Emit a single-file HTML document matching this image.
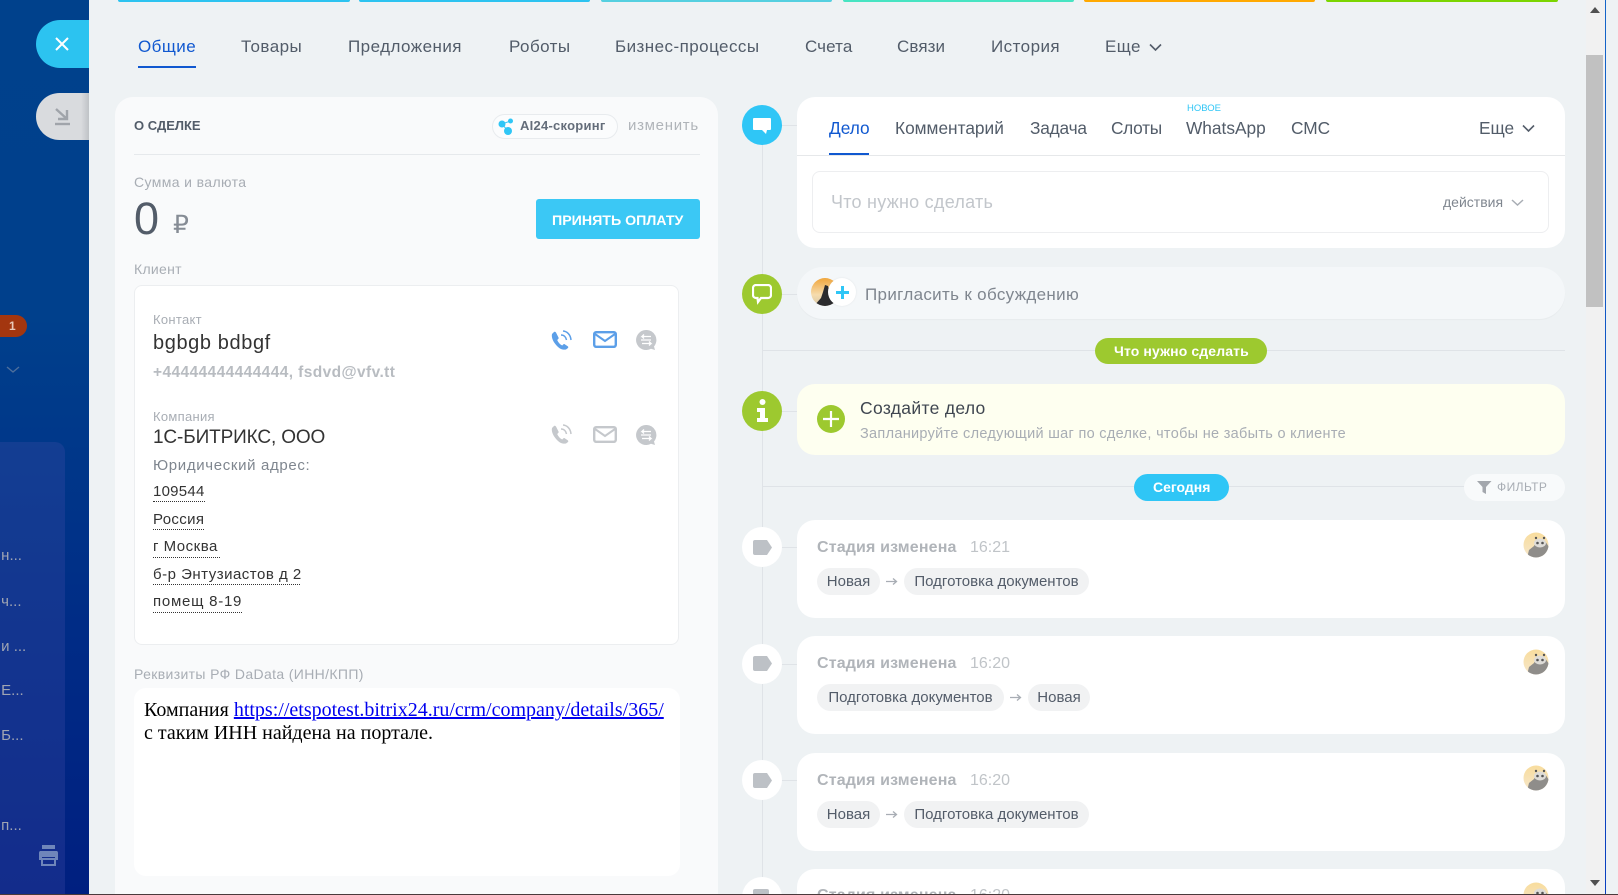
<!DOCTYPE html>
<html lang="ru"><head><meta charset="utf-8"><title>Сделка</title>
<style>
html,body{margin:0;padding:0;width:1618px;height:895px;overflow:hidden;background:#eef2f4}
body{position:relative;font-family:"Liberation Sans",sans-serif;color:#535c69}
.a,.t{position:absolute}
.t{white-space:nowrap;line-height:0}
.tab{font-size:17px;color:#525c69;top:47px;letter-spacing:.45px}
.rt{font-size:17.300px;color:#525c69;top:128px}
.card{position:absolute;left:797px;width:768px;background:#fff;border-radius:18px}
.circ{position:absolute;left:742px;width:40px;height:40px;border-radius:50%}
.dot{position:absolute;height:0;border-bottom:1px dotted #333}
.ln{position:absolute;background:#dfe3e7}
.addr{font-size:15px;color:#333;left:153px;letter-spacing:.5px}
.pill{position:absolute;height:27px;background:#f1f2f3;border-radius:14px;font-size:15px;line-height:28px;color:#535c69;text-align:center;white-space:nowrap}
.st{font-size:16px;font-weight:bold;color:#b0b4b9;left:817px;letter-spacing:.15px}
.tm{font-size:16px;color:#c0c4c8;left:970px}
.av{position:absolute;left:1523px}
.side{font-size:15px;color:#a0a5b3;left:-3px}
</style></head><body>

<!-- sidebar -->
<div class="a" style="left:0;top:0;width:89px;height:894px;background:linear-gradient(180deg,#00418c 0%,#00408c 35%,#002c86 70%,#001f80 100%)"></div>
<div class="a" style="left:0;top:442px;width:65px;height:452px;background:rgba(70,80,170,.28);border-radius:0 10px 0 0"></div>
<div class="a" style="left:0;top:315px;width:27px;height:22px;background:#a3360f;border-radius:0 11px 11px 0"></div>
<div class="t" style="left:9px;top:326px;font-size:12px;font-weight:bold;color:#e9c9b8">1</div>
<svg class="a" style="left:6px;top:365px" width="14" height="10"><path d="M1 2l6 5 6-5" fill="none" stroke="#4d6f9c" stroke-width="1.4"/></svg>
<div class="t side" style="top:556px">&nbsp;н...</div>
<div class="t side" style="top:602px">&nbsp;ч...</div>
<div class="t side" style="top:647px">&nbsp;и ...</div>
<div class="t side" style="top:691px">&nbsp;Е...</div>
<div class="t side" style="top:736px">&nbsp;Б...</div>
<div class="t side" style="top:826px">&nbsp;п...</div>
<svg class="a" style="left:38px;top:844px" width="21" height="23"><rect x="4" y="1" width="13" height="4" fill="#6f86ba"/><path d="M2 7h17a2 2 0 0 1 1 2v7h-3v-3H4v3H1V9a2 2 0 0 1 1-2z" fill="#6f86ba"/><rect x="4" y="15" width="13" height="6" fill="none" stroke="#6f86ba" stroke-width="2"/></svg>

<!-- side buttons -->
<div class="a" style="left:36px;top:20px;width:53px;height:48px;background:#2cc3f0;border-radius:24px 0 0 24px"></div>
<svg class="a" style="left:55px;top:37px" width="14" height="14"><path d="M1 1l12 12M13 1L1 13" stroke="#fff" stroke-width="2"/></svg>
<div class="a" style="left:36px;top:93px;width:53px;height:47px;background:linear-gradient(90deg,#d9dbde 85%,#bfc2c6);border-radius:24px 0 0 24px"></div>
<svg class="a" style="left:54px;top:107px" width="17" height="20"><path d="M2 2l11 10M13 3v9H4" fill="none" stroke="#a0a4aa" stroke-width="2.400"/><path d="M1 17h15" stroke="#a0a4aa" stroke-width="2.400"/></svg>

<!-- top stage bars -->
<div class="a" style="left:118px;top:0;width:232px;height:2px;background:#2cc3f0;border-radius:0 0 4px 4px"></div>
<div class="a" style="left:359px;top:0;width:231px;height:2px;background:#2cc3f0;border-radius:0 0 4px 4px"></div>
<div class="a" style="left:601px;top:0;width:231px;height:2px;background:#55d0e0;border-radius:0 0 4px 4px"></div>
<div class="a" style="left:843px;top:0;width:231px;height:2px;background:#47e4c2;border-radius:0 0 4px 4px"></div>
<div class="a" style="left:1084px;top:0;width:231px;height:2px;background:#ffa900;border-radius:0 0 4px 4px"></div>
<div class="a" style="left:1326px;top:0;width:232px;height:2px;background:#7bd500;border-radius:0 0 4px 4px"></div>

<!-- main tabs -->
<div class="t tab" style="left:138px;color:#1058d0">Общие</div>
<div class="a" style="left:138px;top:66px;width:58px;height:2px;background:#1058d0"></div>
<div class="t tab" style="left:241px">Товары</div>
<div class="t tab" style="left:348px">Предложения</div>
<div class="t tab" style="left:509px">Роботы</div>
<div class="t tab" style="left:615px">Бизнес-процессы</div>
<div class="t tab" style="left:805px;letter-spacing:.1px">Счета</div>
<div class="t tab" style="left:897px;letter-spacing:.1px">Связи</div>
<div class="t tab" style="left:991px">История</div>
<div class="t tab" style="left:1105px">Еще</div>
<svg class="a" style="left:1149px;top:43px" width="13" height="9"><path d="M1 1.500l5.500 5.500 5.500-5.500" fill="none" stroke="#535c69" stroke-width="1.600"/></svg>

<!-- left card -->
<div class="a" style="left:115px;top:97px;width:603px;height:830px;background:#f9fafb;border-radius:18px"></div>
<div class="t" style="left:134px;top:126px;font-size:13px;font-weight:bold;color:#525c69">О СДЕЛКЕ</div>
<div class="a" style="left:134px;top:154px;width:566px;height:1px;background:#e6e9ec"></div>
<div class="a" style="left:492px;top:114px;width:124px;height:23px;background:#fbfcfd;border:1px solid #e8ebee;border-radius:13px"></div>
<svg class="a" style="left:498px;top:118px" width="16" height="17"><circle cx="4" cy="6" r="3.500" fill="#2fc6f6"/><circle cx="12.500" cy="3" r="2.500" fill="#2fc6f6"/><circle cx="10" cy="13" r="4" fill="#2fc6f6"/><path d="M4 6L12.500 3M4 6l6 7" stroke="#2fc6f6"/></svg>
<div class="t" style="left:520px;top:126px;font-size:13px;font-weight:bold;color:#646d7a;letter-spacing:.25px">AI24-скоринг</div>
<div class="t" style="left:628px;top:126px;font-size:15px;color:#b0b4b9;letter-spacing:.7px">изменить</div>
<div class="t" style="left:134px;top:182px;font-size:14px;color:#a8adb4;letter-spacing:.38px">Сумма и валюта</div>
<div class="t" style="left:134px;top:219px;font-size:45px;color:#535c69">0</div>
<div class="t" style="left:173px;top:225px;font-size:25px;color:#868c95">₽</div>
<div class="a" style="left:536px;top:199px;width:164px;height:40px;background:#3bc8f5;border-radius:3px"></div>
<div class="t" style="left:552px;top:221px;font-size:14.200px;font-weight:bold;color:#fff">ПРИНЯТЬ ОПЛАТУ</div>
<div class="t" style="left:134px;top:269px;font-size:14px;color:#a8adb4;letter-spacing:.3px">Клиент</div>

<div class="a" style="left:134px;top:285px;width:543px;height:358px;background:#fff;border:1px solid #eceef0;border-radius:8px"></div>
<div class="t" style="left:153px;top:320px;font-size:13px;color:#a8adb4;letter-spacing:.3px">Контакт</div>
<div class="t" style="left:153px;top:343px;font-size:20px;color:#333;letter-spacing:.6px">bgbgb bdbgf</div>
<div class="t" style="left:153px;top:373px;font-size:15.500px;font-weight:bold;color:#b8bcc1;letter-spacing:.4px">+44444444444444, fsdvd@vfv.tt</div>
<div class="t" style="left:153px;top:417px;font-size:13px;color:#a8adb4;letter-spacing:.3px">Компания</div>
<div class="t" style="left:153px;top:438px;font-size:19px;color:#333;letter-spacing:-.13px">1С-БИТРИКС, ООО</div>
<div class="t" style="left:153px;top:466px;font-size:15px;color:#7f868f;letter-spacing:.65px">Юридический адрес:</div>
<div class="t addr" style="top:492px;letter-spacing:.25px">109544</div><div class="dot" style="left:153px;top:501px;width:52px"></div>
<div class="t addr" style="top:520px;letter-spacing:.35px">Россия</div><div class="dot" style="left:153px;top:529px;width:51px"></div>
<div class="t addr" style="top:547px">г Москва</div><div class="dot" style="left:153px;top:557px;width:67px"></div>
<div class="t addr" style="top:575px">б-р Энтузиастов д 2</div><div class="dot" style="left:153px;top:584px;width:147px"></div>
<div class="t addr" style="top:602px;letter-spacing:.75px">помещ 8-19</div><div class="dot" style="left:153px;top:612px;width:89px"></div>

<!-- contact icons -->
<svg class="a" style="left:551px;top:330px" width="22" height="21"><path d="M3 2L1 4c-1 4 2 9 5 12s5 4 9 3.500l2-1.500c.5-.8.300-1.300-.3-1.800l-3-2c-.6-.3-1-.2-1.500.3l-1 1c-2-1-4-3-5-5.500l1-1c.5-.5.600-1 .3-1.500L5 2.500C4.500 1.800 3.700 1.500 3 2z" fill="#5c9fe8"/><path d="M10 5c3 0 5 2 5.500 5M12 1c4 .3 7.500 3.500 8 9" fill="none" stroke="#5c9fe8" stroke-width="1.500"/></svg>
<svg class="a" style="left:593px;top:331px" width="24" height="17"><rect x="1.200" y="1.200" width="21.600" height="14.600" rx="2" fill="none" stroke="#5c9fe8" stroke-width="2.400"/><path d="M2 3l10 7 10-7" fill="none" stroke="#5c9fe8" stroke-width="2"/></svg>
<svg class="a" style="left:636px;top:330px" width="21" height="21"><path d="M10 0a10 10 0 1 0 5 18.700l4 1.300-1-3.500A10 10 0 0 0 10 0z" fill="#c5c8cc"/><path d="M15 6.500H6l2-2M6 6.500l2 2M5 10h10M6 13.500h9l-2-2M15 13.500l-2 2" fill="none" stroke="#fff" stroke-width="1.300"/></svg>
<svg class="a" style="left:551px;top:424px" width="22" height="21"><path d="M3 2L1 4c-1 4 2 9 5 12s5 4 9 3.500l2-1.500c.5-.8.300-1.300-.3-1.800l-3-2c-.6-.3-1-.2-1.500.3l-1 1c-2-1-4-3-5-5.500l1-1c.5-.5.600-1 .3-1.500L5 2.500C4.500 1.800 3.700 1.500 3 2z" fill="#c5c8cc"/><path d="M10 5c3 0 5 2 5.500 5M12 1c4 .3 7.500 3.500 8 9" fill="none" stroke="#c5c8cc" stroke-width="1.500"/></svg>
<svg class="a" style="left:593px;top:426px" width="24" height="17"><rect x="1.200" y="1.200" width="21.600" height="14.600" rx="2" fill="none" stroke="#c5c8cc" stroke-width="2.400"/><path d="M2 3l10 7 10-7" fill="none" stroke="#c5c8cc" stroke-width="2"/></svg>
<svg class="a" style="left:636px;top:425px" width="21" height="21"><path d="M10 0a10 10 0 1 0 5 18.700l4 1.300-1-3.500A10 10 0 0 0 10 0z" fill="#c5c8cc"/><path d="M15 6.500H6l2-2M6 6.500l2 2M5 10h10M6 13.500h9l-2-2M15 13.500l-2 2" fill="none" stroke="#fff" stroke-width="1.300"/></svg>

<div class="t" style="left:134px;top:674px;font-size:14px;color:#a8adb4;letter-spacing:.36px">Реквизиты РФ DaData (ИНН/КПП)</div>
<div class="a" style="left:134px;top:688px;width:546px;height:188px;background:#fff;border-radius:12px"></div>
<div class="t" style="left:144px;top:710px;font-family:'Liberation Serif',serif;font-size:20px;color:#000">Компания <span style="color:#0000ee;text-decoration:underline">https://etspotest.bitrix24.ru/crm/company/details/365/</span></div>
<div class="t" style="left:144px;top:733px;font-family:'Liberation Serif',serif;font-size:20px;color:#000">с таким ИНН найдена на портале.</div>

<!-- timeline lines -->
<div class="ln" style="left:762px;top:125px;width:1px;height:770px"></div>
<div class="ln" style="left:762px;top:125px;width:36px;height:1px"></div>
<div class="ln" style="left:762px;top:294px;width:36px;height:1px"></div>
<div class="ln" style="left:762px;top:350px;width:803px;height:1px"></div>
<div class="ln" style="left:762px;top:411px;width:36px;height:1px"></div>
<div class="ln" style="left:762px;top:486px;width:702px;height:1px"></div>
<div class="ln" style="left:762px;top:547px;width:36px;height:1px"></div>
<div class="ln" style="left:762px;top:664px;width:36px;height:1px"></div>
<div class="ln" style="left:762px;top:780px;width:36px;height:1px"></div>

<!-- composer -->
<div class="circ" style="top:105px;background:#2fc6f6"></div>
<svg class="a" style="left:753px;top:118px" width="18" height="17"><path d="M1 0h16a1 1 0 0 1 1 1v10a1 1 0 0 1-1 1h-3l-1 4-4-4H1a1 1 0 0 1-1-1V1a1 1 0 0 1 1-1z" fill="#fff"/></svg>
<div class="card" style="top:97px;height:151px"></div>
<div class="a" style="left:797px;top:155px;width:768px;height:1px;background:#e6e8ea"></div>
<div class="t rt" style="left:829px;color:#1058d0">Дело</div>
<div class="a" style="left:829px;top:153px;width:40px;height:2px;background:#1058d0"></div>
<div class="t rt" style="left:895px">Комментарий</div>
<div class="t rt" style="left:1030px;letter-spacing:-.2px">Задача</div>
<div class="t rt" style="left:1111px;letter-spacing:-.3px">Слоты</div>
<div class="t rt" style="left:1186px">WhatsApp</div>
<div class="t" style="left:1187px;top:109px;font-size:9.500px;color:#2fc6f6">НОВОЕ</div>
<div class="t rt" style="left:1291px">СМС</div>
<div class="t rt" style="left:1479px">Еще</div>
<svg class="a" style="left:1522px;top:124px" width="13" height="9"><path d="M1 1.500l5.500 5.500 5.500-5.500" fill="none" stroke="#535c69" stroke-width="1.600"/></svg>
<div class="a" style="left:812px;top:171px;width:735px;height:60px;background:#fff;border:1px solid #edeef0;border-radius:8px"></div>
<div class="t" style="left:831px;top:202px;font-size:18px;color:#c2c6cb;letter-spacing:.25px">Что нужно сделать</div>
<div class="t" style="left:1443px;top:202px;font-size:14px;color:#7f868f">действия</div>
<svg class="a" style="left:1511px;top:199px" width="13" height="8"><path d="M1 1l5.500 5L12 1" fill="none" stroke="#a8adb4" stroke-width="1.500"/></svg>

<!-- invite -->
<div class="circ" style="top:274px;background:#9dc92f"></div>
<svg class="a" style="left:752px;top:284px" width="20" height="21"><path d="M4 1h12a3 3 0 0 1 3 3v7a3 3 0 0 1-3 3H9l-3 4-.5-4H4a3 3 0 0 1-3-3V4a3 3 0 0 1 3-3z" fill="none" stroke="#fff" stroke-width="2.200"/></svg>
<div class="a" style="left:797px;top:267px;width:768px;height:52px;background:#f4f7f9;border-radius:26px;box-shadow:0 1px 1px rgba(0,0,0,.03)"></div>
<svg class="a" style="left:811px;top:278px" width="28" height="28"><defs><clipPath id="c0"><circle cx="14" cy="14" r="14"/></clipPath><linearGradient id="g0" x1="0" y1="0" x2="0" y2="1"><stop offset="0" stop-color="#f0a63c"/><stop offset=".6" stop-color="#f6dcae"/><stop offset="1" stop-color="#d6c6a8"/></linearGradient></defs><g clip-path="url(#c0)"><rect width="28" height="28" fill="url(#g0)"/><path d="M14 7l3 1 2 8 6 12H3l7-8 2-6z" fill="#2b2b2e"/></g></svg>
<div class="a" style="left:828px;top:278px;width:28px;height:28px;background:#fff;border-radius:50%;box-shadow:0 0 2px rgba(0,0,0,.08)"></div>
<svg class="a" style="left:836px;top:286px" width="13" height="13"><path d="M6.500 0v13M0 6.500h13" stroke="#2fc6f6" stroke-width="3"/></svg>
<div class="t" style="left:865px;top:295px;font-size:17px;color:#7f868f;letter-spacing:.33px">Пригласить к обсуждению</div>

<!-- to do -->
<div class="a" style="left:1095px;top:338px;width:172px;height:26px;background:#9dc92f;border-radius:13px"></div>
<div class="t" style="left:1114px;top:351px;font-size:14px;font-weight:bold;color:#fff;letter-spacing:.12px">Что нужно сделать</div>
<div class="circ" style="top:391px;background:#9dc92f"></div>
<svg class="a" style="left:755px;top:399px" width="15" height="24"><circle cx="7.500" cy="3" r="3" fill="#fff"/><path d="M2 9h8v10h3v4H2v-4h3v-6H2z" fill="#fff"/></svg>
<div class="card" style="top:384px;height:71px;background:#fefff0"></div>
<div class="a" style="left:817px;top:405px;width:28px;height:28px;background:#9dc92f;border-radius:50%"></div>
<svg class="a" style="left:823px;top:411px" width="16" height="16"><path d="M8 0v16M0 8h16" stroke="#fff" stroke-width="2.200"/></svg>
<div class="t" style="left:860px;top:408px;font-size:17.500px;color:#3f4650;letter-spacing:.32px">Создайте дело</div>
<div class="t" style="left:860px;top:434px;font-size:14.500px;color:#a8adb4;letter-spacing:.3px">Запланируйте следующий шаг по сделке, чтобы не забыть о клиенте</div>

<!-- today -->
<div class="a" style="left:1134px;top:474px;width:95px;height:27px;background:#2fc6f6;border-radius:14px"></div>
<div class="t" style="left:1153px;top:487px;font-size:14px;font-weight:bold;color:#fff">Сегодня</div>
<div class="a" style="left:1464px;top:474px;width:101px;height:27px;background:#f8fafb;border-radius:14px"></div>
<svg class="a" style="left:1477px;top:481px" width="15" height="13"><path d="M0 0h14.500L9 6v7L5.500 11V6z" fill="#a3a7ad"/></svg>
<div class="t" style="left:1497px;top:487px;font-size:12px;color:#a8adb4;letter-spacing:.45px">ФИЛЬТР</div>

<!-- history -->
<div class="circ" style="top:527px;background:#fff"></div>
<svg class="a" style="left:753px;top:540px" width="20" height="15"><path d="M2 0h12l5 7.500L14 15H2a2 2 0 0 1-2-2V2a2 2 0 0 1 2-2z" fill="#bdc1c6"/></svg>
<div class="card" style="top:520px;height:98px"></div>
<div class="t st" style="top:547.500px">Стадия изменена</div><div class="t tm" style="top:547.500px">16:21</div>
<div class="pill" style="left:817px;top:568px;width:63px">Новая</div>
<svg class="a" style="left:886px;top:577px" width="12" height="9"><path d="M0 4.500h10M7 1.500l3.500 3-3.500 3" fill="none" stroke="#a8adb4" stroke-width="1.300"/></svg>
<div class="pill" style="left:904px;top:568px;width:185px">Подготовка документов</div>
<svg class="av" style="top:532px" width="26" height="26"><defs><clipPath id="c1"><circle cx="13" cy="13" r="12.500"/></clipPath><linearGradient id="g1" x1="0" y1="0" x2="0" y2="1"><stop offset="0" stop-color="#f8dc9c"/><stop offset="1" stop-color="#f6e7cc"/></linearGradient></defs><g clip-path="url(#c1)"><rect width="26" height="26" fill="url(#g1)"/><path d="M4 26l2-8 5-4 2-5h9l4 6v11z" fill="#8f8d8a"/><ellipse cx="17" cy="11" rx="6" ry="4.500" fill="#dedcd8"/><circle cx="14.500" cy="11" r="1.300" fill="#555"/><circle cx="19.500" cy="11" r="1.300" fill="#555"/><circle cx="13" cy="6" r="1.200" fill="#555"/><circle cx="21" cy="6" r="1.200" fill="#555"/></g></svg>

<div class="circ" style="top:644px;background:#fff"></div>
<svg class="a" style="left:753px;top:656px" width="20" height="15"><path d="M2 0h12l5 7.500L14 15H2a2 2 0 0 1-2-2V2a2 2 0 0 1 2-2z" fill="#bdc1c6"/></svg>
<div class="card" style="top:636px;height:98px"></div>
<div class="t st" style="top:663.500px">Стадия изменена</div><div class="t tm" style="top:663.500px">16:20</div>
<div class="pill" style="left:817px;top:684px;width:187px">Подготовка документов</div>
<svg class="a" style="left:1010px;top:693px" width="12" height="9"><path d="M0 4.500h10M7 1.500l3.500 3-3.500 3" fill="none" stroke="#a8adb4" stroke-width="1.300"/></svg>
<div class="pill" style="left:1028px;top:684px;width:62px">Новая</div>
<svg class="av" style="top:649px" width="26" height="26"><g clip-path="url(#c1)"><rect width="26" height="26" fill="url(#g1)"/><path d="M4 26l2-8 5-4 2-5h9l4 6v11z" fill="#8f8d8a"/><ellipse cx="17" cy="11" rx="6" ry="4.500" fill="#dedcd8"/><circle cx="14.500" cy="11" r="1.300" fill="#555"/><circle cx="19.500" cy="11" r="1.300" fill="#555"/><circle cx="13" cy="6" r="1.200" fill="#555"/><circle cx="21" cy="6" r="1.200" fill="#555"/></g></svg>

<div class="circ" style="top:760px;background:#fff"></div>
<svg class="a" style="left:753px;top:773px" width="20" height="15"><path d="M2 0h12l5 7.500L14 15H2a2 2 0 0 1-2-2V2a2 2 0 0 1 2-2z" fill="#bdc1c6"/></svg>
<div class="card" style="top:753px;height:98px"></div>
<div class="t st" style="top:780.500px">Стадия изменена</div><div class="t tm" style="top:780.500px">16:20</div>
<div class="pill" style="left:817px;top:801px;width:63px">Новая</div>
<svg class="a" style="left:886px;top:810px" width="12" height="9"><path d="M0 4.500h10M7 1.500l3.500 3-3.500 3" fill="none" stroke="#a8adb4" stroke-width="1.300"/></svg>
<div class="pill" style="left:904px;top:801px;width:185px">Подготовка документов</div>
<svg class="av" style="top:765px" width="26" height="26"><g clip-path="url(#c1)"><rect width="26" height="26" fill="url(#g1)"/><path d="M4 26l2-8 5-4 2-5h9l4 6v11z" fill="#8f8d8a"/><ellipse cx="17" cy="11" rx="6" ry="4.500" fill="#dedcd8"/><circle cx="14.500" cy="11" r="1.300" fill="#555"/><circle cx="19.500" cy="11" r="1.300" fill="#555"/><circle cx="13" cy="6" r="1.200" fill="#555"/><circle cx="21" cy="6" r="1.200" fill="#555"/></g></svg>

<div class="circ" style="top:877px;background:#fff"></div>
<svg class="a" style="left:753px;top:889px" width="20" height="6"><rect width="16" height="6" rx="2" fill="#bdc1c6"/></svg>
<div class="card" style="top:869px;height:60px"></div>
<div class="t st" style="top:896px">Стадия изменена</div>
<div class="t tm" style="top:896px">16:20</div>
<svg class="av" style="top:882px" width="26" height="26"><g clip-path="url(#c1)"><rect width="26" height="26" fill="url(#g1)"/><path d="M4 26l2-8 5-4 2-5h9l4 6v11z" fill="#8f8d8a"/><ellipse cx="17" cy="11" rx="6" ry="4.500" fill="#dedcd8"/><circle cx="14.500" cy="11" r="1.300" fill="#555"/><circle cx="19.500" cy="11" r="1.300" fill="#555"/></g></svg>

<!-- scrollbar -->
<div class="a" style="left:1586px;top:0;width:19px;height:894px;background:#f1f1f1"></div>
<div class="a" style="left:1586px;top:55px;width:17px;height:252px;background:#c1c1c1"></div>
<svg class="a" style="left:1590px;top:7px" width="10" height="7"><path d="M5 0l5 6H0z" fill="#505050"/></svg>
<svg class="a" style="left:1590px;top:880px" width="10" height="7"><path d="M0 0h10L5 6z" fill="#505050"/></svg>
<div class="a" style="left:1605px;top:0;width:1px;height:894px;background:linear-gradient(180deg,#1565c8,#0a3fc0)"></div>
<div class="a" style="left:0;top:894px;width:1618px;height:1px;background:#4a3a3c"></div>
</body></html>
